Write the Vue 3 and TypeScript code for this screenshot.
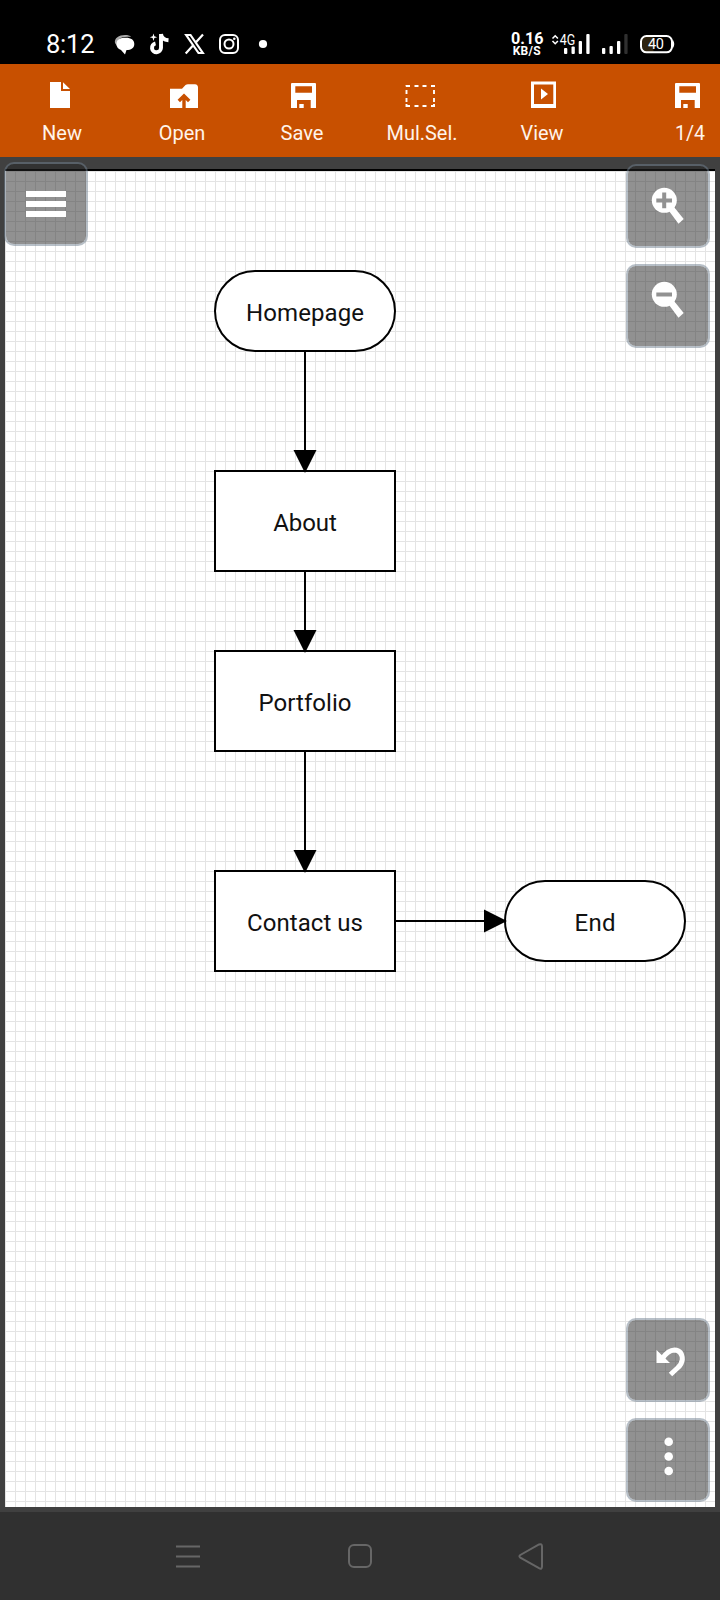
<script setup lang="ts">
type IconName = 'new' | 'open' | 'save' | 'select' | 'view'

interface Tool {
  icon: IconName
  label: string
  width: number
  last?: boolean
}

interface FlowNode {
  label: string
  x: number
  y: number
  height: number
  radius: number
  textWidth: number
}

const tools: Tool[] = [
  { icon: 'new', label: 'New', width: 40 },
  { icon: 'open', label: 'Open', width: 46.5 },
  { icon: 'save', label: 'Save', width: 43 },
  { icon: 'select', label: 'Mul.Sel.', width: 71 },
  { icon: 'view', label: 'View', width: 43 },
  { icon: 'save', label: '1/4', width: 30, last: true },
]

const nodes: FlowNode[] = [
  { label: 'Homepage', x: 215, y: 271, height: 80, radius: 40, textWidth: 118 },
  { label: 'About', x: 215, y: 471, height: 100, radius: 0, textWidth: 63.5 },
  { label: 'Portfolio', x: 215, y: 651, height: 100, radius: 0, textWidth: 93 },
  { label: 'Contact us', x: 215, y: 871, height: 100, radius: 0, textWidth: 116 },
  { label: 'End', x: 505, y: 881, height: 80, radius: 40, textWidth: 41 },
]

const downArrows = [
  { from: 351, to: 471 },
  { from: 571, to: 651 },
  { from: 751, to: 871 },
]

const dots = [23.7, 38.5, 53]
</script>

<template>
  <div class="screen">
    <header class="status">
      <svg class="status-art" viewBox="0 0 720 64" fill="#fff">
        <text x="46" y="53" font-size="25.5" textLength="48.5">8:12</text>
        <path d="M115 43C114 38 119 35 125 35C128 35 130 35.5 131 37C121 36 117 39 117 46Z" fill="#aaa" />
        <path d="M116.500 44C116.500 39.500 120 37.800 126 37.800C131 37.800 134.300 40 134.300 44C134.300 48 131 50 126.500 50L125 54.500L121 50C118 49 116.500 47 116.500 44Z" />
        <path d="M161 34v14a4.500 4.500 0 1 1-5.500-4.600M161 34c.6 4 3.200 6 7.500 6.300" fill="none" stroke="#fff" stroke-width="3.900" />
        <path d="M153.500 33.500l.9 2.800 2.800.9-2.800.9-.9 2.800-.9-2.800-2.800-.9 2.800-.9z" />
        <path d="M186.200 35h4.300l12.300 18h-4.300zM203 34.500l-7.700 8.500M193.200 45.300l-7.500 8.200" fill="none" stroke="#fff" stroke-width="2.200" />
        <g fill="none" stroke="#fff" stroke-width="2">
          <rect x="220" y="35" width="18" height="18" rx="5" />
          <circle cx="229" cy="44" r="4.500" />
        </g>
        <circle cx="234.300" cy="38.700" r="1.300" />
        <circle cx="263" cy="44" r="4.100" />
        <text x="511" y="44" font-size="16" textLength="32.500" lengthAdjust="spacingAndGlyphs" class="heavy">0.16</text>
        <text x="512.700" y="55.200" font-size="12" textLength="28" class="heavy">KB/S</text>
        <path d="M552.500 38.500l2.700-2.700 2.700 2.700M552.500 41l2.700 2.700 2.700-2.700" fill="none" stroke="#fff" stroke-width="1.600" />
        <text x="559.700" y="45.300" font-size="14" textLength="15.500" lengthAdjust="spacingAndGlyphs">4G</text>
        <rect x="564" y="48" width="3.300" height="6" rx="1" />
        <rect x="571.500" y="46.500" width="3.300" height="7.500" rx="1" />
        <rect x="578.700" y="41" width="3.300" height="13" rx="1" />
        <rect x="586.300" y="34" width="3.300" height="20" rx="1" />
        <rect x="602" y="48" width="3.300" height="6" rx="1" />
        <rect x="609.500" y="46" width="3.300" height="8" rx="1" />
        <rect x="617" y="41" width="3.300" height="13" rx="1" />
        <rect x="624.300" y="34" width="3.300" height="20" rx="1" fill="#303030" />
        <path d="M646 36h7.500v16H646q-5 0-5-5v-6q0-5 5-5" fill="#2e230f" />
        <rect x="641" y="36" width="31" height="16.300" rx="5.500" fill="none" stroke="#fff" stroke-width="2" />
        <path d="M672.500 40.500q2 3.500 0 7" stroke="#fff" stroke-width="1.500" />
        <text x="648" y="49.300" font-size="14.500" textLength="16">40</text>
      </svg>
    </header>

    <nav class="toolbar">
      <button v-for="tool in tools" :key="tool.label" class="tool" :class="{ last: tool.last }">
        <svg class="tool-icon" viewBox="0 0 40 32" fill="#fff">
          <path v-if="tool.icon === 'new'" d="M8 4H19V13H28V30H8ZM21 4.300L28 11H21Z" />
          <template v-else-if="tool.icon === 'open'">
            <path d="M8 10.700H20L23.500 7Q24.500 6.200 26 6.200H33Q36 6.500 36 9.500V30H8Z" />
            <path d="M22 30V18M16.800 23L22 17.800L27.200 23" fill="none" stroke="#c85000" stroke-width="3.400" />
          </template>
          <path
            v-else-if="tool.icon === 'save'"
            fill-rule="evenodd"
            d="M9 6q0-1 1-1H33q1 0 1 1V30H28.700V22H15V30H9ZM13.300 8.300V14.700H30V8.300ZM17.300 26H21.700V30H17.300Z"
          />
          <path
            v-else-if="tool.icon === 'select'"
            d="M4 8h4M12.500 8h4M20.500 8h4M29 8h4M4 28h4M12.500 28h4M20.500 28h4M29 28h4M4.500 12v4M4.500 20v4M4.500 26v3M4.500 7v1.500M32 7v1.500M32 12v4M32 20v4M32 26v3"
            fill="none"
            stroke="#fff"
            stroke-width="1.900"
          />
          <path v-else fill-rule="evenodd" d="M9 3.500H34V30H9ZM12 6.500V26H31.300V6.500ZM19 10.500L26 16L19 21.500Z" />
        </svg>
        <svg class="tool-label" viewBox="0 0 90 26">
          <text x="45" y="20" text-anchor="middle" font-size="20.500" :textLength="tool.width" lengthAdjust="spacingAndGlyphs">{{ tool.label }}</text>
        </svg>
      </button>
    </nav>

    <main class="workspace">
      <div class="paper">
        <svg class="diagram" viewBox="5 171 710 1336">
          <defs>
            <pattern id="grid" x="5" y="171" width="10" height="10" patternUnits="userSpaceOnUse">
              <path d="M.5 0V10M0 .5H10" stroke="#e4e4e4" />
            </pattern>
          </defs>
          <rect x="5" y="171" width="710" height="1336" fill="url(#grid)" />
          <g v-for="node in nodes" :key="node.label">
            <rect :x="node.x" :y="node.y" width="180" :height="node.height" :rx="node.radius" class="shape" />
            <text
              :x="node.x + 90"
              :y="node.y + node.height / 2 + 10"
              text-anchor="middle"
              font-size="24"
              fill="#111"
              :textLength="node.textWidth"
            >{{ node.label }}</text>
          </g>
          <g v-for="arrow in downArrows" :key="arrow.from">
            <path :d="`M305 ${arrow.from}V${arrow.to - 10}`" class="line" />
            <path :d="`M293.500 ${arrow.to - 21}H316.500L305 ${arrow.to + 2}Z`" />
          </g>
          <path d="M395 921H490" class="line" />
          <path d="M484 909.500V932.500L507 921Z" />
        </svg>
      </div>

      <button class="float menu" aria-label="Menu">
        <svg viewBox="0 0 84 84" fill="#fff"><path d="M22 29H62V35H22ZM22 39H62V45H22ZM22 49H62V55H22Z" /></svg>
      </button>
      <div class="stack top">
        <button class="float" aria-label="Zoom in">
          <svg viewBox="0 0 84 84" fill="#fff">
            <path d="M43 47L48 43L57.700 55L52.500 59.700Z" />
            <circle cx="38.300" cy="36.300" r="12.500" />
            <path d="M30.300 36.500H46M38.200 28.500V44.300" stroke="#929292" stroke-width="4" />
          </svg>
        </button>
        <button class="float" aria-label="Zoom out">
          <svg viewBox="0 6 84 84" fill="#fff">
            <path d="M43 47L48 43L57.700 55L52.500 59.700Z" />
            <circle cx="38.300" cy="36.300" r="12.500" />
            <path d="M30.300 36.500H46" stroke="#929292" stroke-width="4" />
          </svg>
        </button>
      </div>
      <div class="stack bottom">
        <button class="float" aria-label="Undo">
          <svg viewBox="0 0 84 84" fill="#fff">
            <path d="M30.500 32V45H44Z" />
            <path d="M36 41Q42 32 48.500 32Q56.300 32.500 56.300 41.500Q56 46 51.500 50L44.500 56.500" fill="none" stroke="#fff" stroke-width="5" />
          </svg>
        </button>
        <button class="float" aria-label="More">
          <svg viewBox="0 0 84 84" fill="#fff"><circle v-for="y in dots" :key="y" cx="42.700" :cy="y" r="4.300" /></svg>
        </button>
      </div>
    </main>

    <footer class="system">
      <svg viewBox="0 0 26 30"><path d="M1 4.500H25M1 14.500H25M1 24.500H25" /></svg>
      <svg viewBox="0 0 26 30"><rect x="2" y="3" width="22" height="22" rx="5" /></svg>
      <svg viewBox="0 0 26 30"><path d="M1.300 13Q-.5 14.300 1.300 15.600L20 26.200Q23 27.700 23 24.500V4.500Q23 1.300 20 2.500Z" /></svg>
    </footer>
  </div>
</template>

<style scoped>
.screen {
  display: flex;
  flex-direction: column;
  width: 720px;
  height: 1600px;
  overflow: hidden;
  font-family: Roboto, "Liberation Sans", sans-serif;
  background: #404040;
}
button {
  padding: 0;
  border: 0;
  background: none;
  font: inherit;
}
svg {
  display: block;
}
.status {
  flex: none;
  height: 64px;
  background: #000;
}
.status-art {
  width: 720px;
  height: 64px;
}
.heavy {
  font-weight: 700;
}
.toolbar {
  display: grid;
  flex: none;
  grid-template-columns: repeat(5, 120px) 118px;
  box-sizing: border-box;
  height: 93px;
  padding: 14px 0 0 2px;
  background: #c85000;
}
.tool {
  display: flex;
  flex-direction: column;
  align-items: center;
  gap: 10px;
}
.tool.last {
  width: 90px;
  margin-left: 43px;
}
.tool-icon {
  width: 40px;
  height: 32px;
}
.tool.last .tool-icon {
  margin-right: 8px;
}
.tool-label {
  width: 90px;
  height: 26px;
  fill: #fff4ea;
}
.workspace {
  position: relative;
  flex: none;
  box-sizing: border-box;
  height: 1355px;
  padding: 12px 5px 5px;
}
.workspace::before {
  content: "";
  position: absolute;
  top: 12px;
  left: 5px;
  width: 710px;
  height: 2px;
  background: #000;
}
.paper {
  height: 1336px;
  margin-top: 2px;
  background: #fff;
}
.diagram {
  width: 710px;
  height: 1336px;
}
.shape {
  fill: #fff;
  stroke: #000;
  stroke-width: 2;
}
.line {
  stroke: #000;
  stroke-width: 2;
}
.float {
  display: block;
  box-sizing: border-box;
  width: 84px;
  height: 84px;
  border: 2px solid rgba(112, 128, 144, 0.5);
  border-radius: 10px;
  background: rgba(35, 35, 35, 0.5);
  background-clip: padding-box;
}
.float svg {
  width: 84px;
  height: 84px;
  margin: -2px;
}
.menu {
  position: absolute;
  top: 5px;
  left: 4px;
}
.stack {
  position: absolute;
  right: 10px;
  display: flex;
  flex-direction: column;
  gap: 16px;
}
.top {
  top: 7px;
}
.bottom {
  bottom: 10px;
}
.system {
  display: flex;
  flex: none;
  gap: 146px;
  box-sizing: border-box;
  height: 88px;
  padding: 30px 0 0 175px;
  background: #303030;
}
.system svg {
  width: 26px;
  height: 30px;
  overflow: visible;
  fill: none;
  stroke: #666;
  stroke-width: 2;
}
</style>
